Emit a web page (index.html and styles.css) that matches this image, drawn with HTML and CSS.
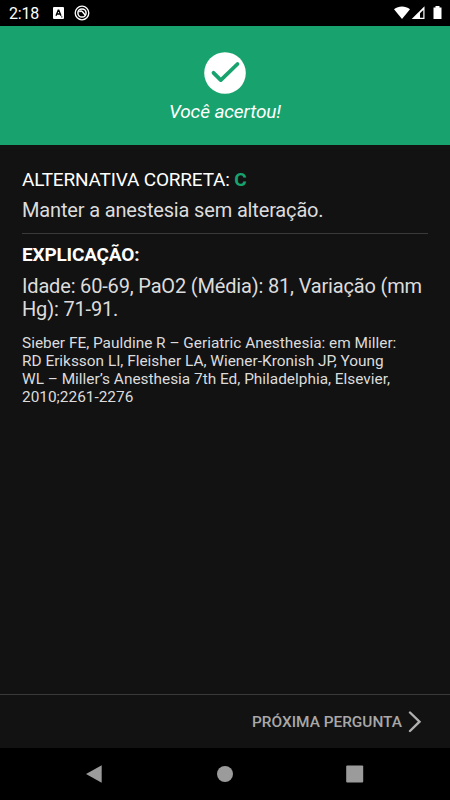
FILE: index.html
```html
<!DOCTYPE html>
<html lang="pt-BR">
<head>
  <meta charset="UTF-8">
  <meta name="viewport" content="width=device-width, initial-scale=1.0">
  <title>Resposta</title>
  <link rel="stylesheet" href="styles.css">
</head>
<body>
  <div class="status-bar">
    <span class="clock">2:18</span>
    <svg class="status-app" width="11" height="12" viewBox="0 0 11 12">
      <rect width="11" height="12" rx="1" fill="#fff"/>
      <path d="M3 8.800L5.200 3.200h.6L8 8.800M4 7h3M8.300 9.800h1" fill="none" stroke="#000" stroke-width="1.3"/>
    </svg>
    <svg class="status-sync" width="16" height="16" viewBox="0 0 16 16" fill="none" stroke="#fff">
      <circle cx="8" cy="8" r="6.8" stroke-width="1.3"/>
      <circle cx="8" cy="8" r="4.1" stroke-width="1.5"/>
      <path d="M5.400 6.800c1.600-1.300 3.200-.6 3.600.7l2.600 3" stroke-width="1.5"/>
    </svg>
    <svg class="status-signal" width="50" height="16" viewBox="0 0 50 16">
      <path d="M0 4.200C4.800.6 11.200.6 16 4.200L8 14z" fill="#fff"/>
      <path d="M30.500 1.200V14H17.700z" fill="#fff"/>
      <path d="M29.300 5V12.800H26V8.300z" fill="#000"/>
      <path d="M39.500 2.500h2V1h4v1.500h2V14h-8z" fill="#fff"/>
    </svg>
  </div>

  <header class="result">
    <svg width="42" height="42" viewBox="0 0 42 42">
      <circle cx="21" cy="21" r="20.800" fill="#fff"/>
      <path d="M9.500 20.800l7.300 7.300L33.500 12" class="check"/>
    </svg>
    <p class="result-text">Você acertou!</p>
  </header>

  <main class="content">
    <h1 class="title">ALTERNATIVA CORRETA: <b class="letter">C</b></h1>
    <p class="answer">Manter a anestesia sem alteração.</p>
    <h2 class="subtitle">EXPLICAÇÃO:</h2>
    <p class="explanation">Idade: 60-69, PaO2 (Média): 81, Variação (mm<br>Hg): 71-91.</p>
    <p class="reference">Sieber FE, Pauldine R – Geriatric Anesthesia: em Miller:<br>RD Eriksson LI, Fleisher LA, Wiener-Kronish JP, Young<br>WL – Miller’s Anesthesia 7th Ed, Philadelphia, Elsevier,<br>2010;2261-2276</p>
  </main>

  <footer class="footer">
    <span class="next">PRÓXIMA PERGUNTA</span>
    <svg width="14" height="22" viewBox="0 0 14 22">
      <path d="M2 1.500l9.500 9.200L2 20" class="chevron"/>
    </svg>
  </footer>

  <nav class="nav-bar">
    <svg viewBox="0 0 18 18"><path d="M0 9L15.700.2v17.600z"/></svg>
    <svg viewBox="0 0 18 18"><circle cx="9" cy="9" r="8"/></svg>
    <svg viewBox="0 0 18 18"><rect x=".2" y=".5" width="17" height="17" rx="1"/></svg>
  </nav>
</body>
</html>
```
FILE: styles.css
```css
* {
  box-sizing: border-box;
}
body {
  display: flex;
  flex-direction: column;
  height: 800px;
  margin: 0;
  background: #121212;
  color: #dcdcdc;
  font-family: Roboto, sans-serif;
  overflow: hidden;
}
svg {
  display: block;
  flex: none;
}
h1, h2, p {
  margin: 0;
  white-space: nowrap;
}
.status-bar {
  display: flex;
  align-items: center;
  height: 26px;
  padding: 0 7px 0 9px;
  background: #000;
  color: #fff;
}
.clock {
  width: 44px;
  padding-top: 2px;
  font-size: 16px;
  line-height: 26px;
  letter-spacing: -.2px;
}
.status-sync {
  margin-left: 10px;
}
.status-signal {
  margin-left: auto;
  margin-right: -1px;
}
.result {
  display: flex;
  flex-direction: column;
  align-items: center;
  height: 119px;
  padding-top: 26px;
  background: #18a36e;
}
.check {
  fill: none;
  stroke: #18a36e;
  stroke-width: 3.8;
  stroke-linecap: round;
  stroke-linejoin: round;
}
.result-text {
  margin-top: 6px;
  color: #fff;
  font-size: 19px;
  font-style: italic;
  line-height: 24px;
  letter-spacing: -.1px;
}
.content {
  flex: 1;
  padding: 23px 22px 0;
}
.title, .subtitle {
  color: #fff;
  font-size: 19px;
  line-height: 24px;
  letter-spacing: -.18px;
}
.title {
  font-weight: 400;
}
.letter {
  color: #18a36e;
}
.answer {
  height: 36px;
  margin-top: 6px;
  border-bottom: 1px solid #3a3a3a;
  font-size: 20px;
  line-height: 24px;
  letter-spacing: -.16px;
}
.subtitle {
  margin-top: 9px;
}
.explanation {
  margin-top: 8px;
  font-size: 20px;
  line-height: 23px;
  letter-spacing: -.17px;
}
.reference {
  margin-top: 13px;
  font-size: 15.4px;
  line-height: 18px;
}
.footer {
  display: flex;
  align-items: center;
  justify-content: flex-end;
  gap: 6px;
  height: 54px;
  padding-right: 28px;
  border-top: 1px solid #3a3a3a;
}
.next {
  color: #a8a8a8;
  font-size: 15.4px;
  font-weight: 500;
}
.chevron {
  fill: none;
  stroke: #b0b0b0;
  stroke-width: 2.4;
  stroke-linecap: round;
}
.nav-bar {
  display: flex;
  align-items: center;
  justify-content: space-between;
  height: 52px;
  padding: 0 86px;
  background: #000;
  fill: #9b9b9b;
}
.nav-bar svg {
  width: 18px;
  height: 18px;
}
```
